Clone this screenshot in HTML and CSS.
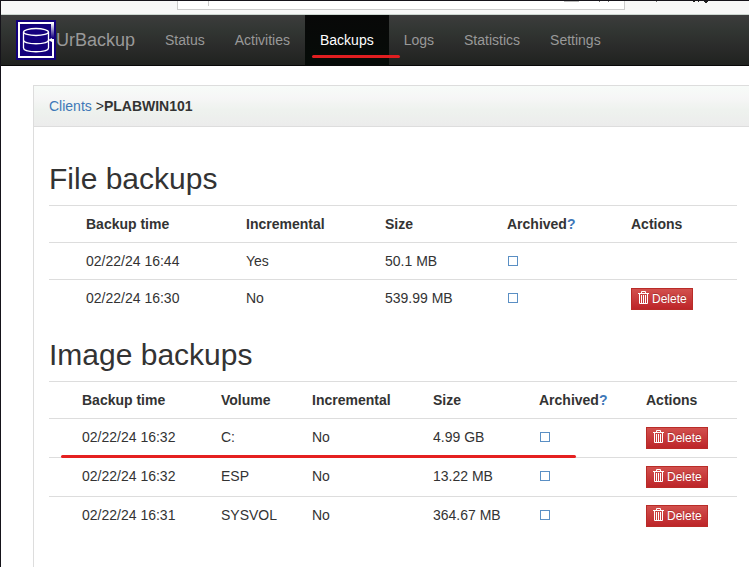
FILE: index.html
```html
<!DOCTYPE html>
<html lang="en">
<head>
<meta charset="utf-8">
<title>UrBackup</title>
<link rel="stylesheet" href="styles.css">
</head>
<body>
<svg class="sprite" aria-hidden="true">
  <symbol id="trash" viewBox="0 0 11 13">
    <path fill="none" stroke="#fff" d="M3.5 2V.5h4V2M0 2.5h11M1.5 3v9.5h8V3M3.5 4v8M5.5 4v8M7.5 4v8"/>
  </symbol>
</svg>
<div class="toolbar" aria-hidden="true"><div class="address"></div><svg class="bits" width="160" height="2" viewBox="0 0 160 2"><path fill="#bbb" d="M9 0h15v1H9z"/><path fill="#777" d="M44 0h1v1h-1zM53 0h1v1h-1zM101 0h1v1h-1z"/><path fill="#222" d="M138 0h2v1h-2zM143 0h1v1h-1zM149 0h4v1h-4zM150 1h2v1h-2z"/></svg></div>
<nav class="navbar">
  <a class="brand" href="#">
    <svg width="40" height="40" viewBox="0 0 40 40" aria-hidden="true">
      <defs>
        <linearGradient id="fade" x1="0" y1="0" x2="0" y2="1">
          <stop offset="0" stop-color="#fff"/>
          <stop offset="1" stop-color="#13007c"/>
        </linearGradient>
      </defs>
      <path fill="#13007c" d="M0 0h40v40H0z"/>
      <path fill="none" stroke="#fff" stroke-width="2" d="M38 3H3v34h34V19"/>
      <path fill="url(#fade)" d="M35 3h3v15h-3z"/>
      <path fill="none" stroke="#fff" stroke-width="1.3" d="M7.500 12v16c0 5 25 5 25 0V12M7.500 20c0 5 25 5 25 0"/>
      <ellipse cx="20" cy="12" rx="12.500" ry="3.500" fill="none" stroke="#fff" stroke-width="1.300"/>
      <path fill="#fff" d="M32 20l4-2v1h2v2h-2v1z"/>
    </svg>UrBackup</a>
  <a class="item" href="#">Status</a>
  <a class="item" href="#">Activities</a>
  <a class="item active" href="#">Backups</a>
  <a class="item" href="#">Logs</a>
  <a class="item" href="#">Statistics</a>
  <a class="item" href="#">Settings</a>
</nav>
<main class="panel">
  <div class="heading"><a href="#">Clients</a> &gt;<strong>PLABWIN101</strong></div>
  <div class="content">
    <h2>File backups</h2>
    <table class="files">
      <thead><tr><th class="lead"></th><th class="time">Backup time</th><th class="incr">Incremental</th><th class="size">Size</th><th class="arch">Archived<a href="#">?</a></th><th>Actions</th></tr></thead>
      <tbody>
        <tr><td></td><td>02/22/24 16:44</td><td>Yes</td><td>50.1 MB</td><td><input type="checkbox" aria-label="Archived"></td><td></td></tr>
        <tr><td></td><td>02/22/24 16:30</td><td>No</td><td>539.99 MB</td><td><input type="checkbox" aria-label="Archived"></td><td><button type="button"><svg width="11" height="13" aria-hidden="true"><use href="#trash"/></svg>Delete</button></td></tr>
      </tbody>
    </table>
    <h2>Image backups</h2>
    <table class="images">
      <thead><tr><th class="lead"></th><th class="time">Backup time</th><th class="volume">Volume</th><th class="incr">Incremental</th><th class="size">Size</th><th class="arch">Archived<a href="#">?</a></th><th>Actions</th></tr></thead>
      <tbody>
        <tr><td class="marked"></td><td>02/22/24 16:32</td><td>C:</td><td>No</td><td>4.99 GB</td><td><input type="checkbox" aria-label="Archived"></td><td><button type="button"><svg width="11" height="13" aria-hidden="true"><use href="#trash"/></svg>Delete</button></td></tr>
        <tr><td></td><td>02/22/24 16:32</td><td>ESP</td><td>No</td><td>13.22 MB</td><td><input type="checkbox" aria-label="Archived"></td><td><button type="button"><svg width="11" height="13" aria-hidden="true"><use href="#trash"/></svg>Delete</button></td></tr>
        <tr><td></td><td>02/22/24 16:31</td><td>SYSVOL</td><td>No</td><td>364.67 MB</td><td><input type="checkbox" aria-label="Archived"></td><td><button type="button"><svg width="11" height="13" aria-hidden="true"><use href="#trash"/></svg>Delete</button></td></tr>
      </tbody>
    </table>
  </div>
</main>
</body>
</html>
```
FILE: styles.css
```css
* { box-sizing: border-box; }

body {
  margin: 0;
  min-height: 100vh;
  display: flex;
  flex-direction: column;
  border-left: 1px solid #15131a;
  background: #fff;
  color: #333;
  font: 14px/20px "Liberation Sans", Arial, sans-serif;
}

a { color: #3f78b8; text-decoration: none; }

.sprite { position: absolute; width: 0; height: 0; }

.toolbar {
  position: relative;
  height: 15px;
  padding: 0 124px 0 176px;
  border-top: 1px solid #15131a;
  border-bottom: 1px solid #ccd6d0;
  background: #f7f7f7;
}

.address {
  height: 9px;
  padding-left: 30px;
  border: 1px solid #ccc;
  border-top: 0;
  background: #fff;
}

.address::before {
  content: "";
  display: block;
  width: 1px;
  height: 5px;
  background: #ccc;
}

.bits { position: absolute; top: 0; right: 34px; }

.navbar {
  display: flex;
  height: 51px;
  padding-left: 15px;
  border-bottom: 1px solid #080808;
  background: linear-gradient(#3c3c3c, #323633 30%, #2a2b2a 65%, #20221f);
}

.brand {
  display: flex;
  align-items: center;
  padding-right: 15px;
  color: #999;
  font-size: 18px;
}

.item {
  position: relative;
  padding: 15px;
  color: #999;
}

.item.active {
  background: linear-gradient(#080808, #060c08);
  color: #fff;
}

.item.active::after {
  content: "";
  position: absolute;
  z-index: 1;
  left: 7px;
  right: -11px;
  bottom: 7px;
  height: 3px;
  border-radius: 2px;
  background: #e01e20;
}

.panel {
  flex: 1;
  margin: 19px 0 0 32px;
  border: 1px solid #ddd;
  border-width: 1px 0 0 1px;
}

.heading {
  padding: 10px 15px;
  border-bottom: 1px solid #ddd;
  background: linear-gradient(#f7fbf8, #f6f6f6 30%, #eef2ee 60%, #ececec);
}

.content { padding: 15px 12px 15px 15px; }

h2 {
  margin: 20px 0 10px;
  font-size: 30px;
  line-height: 33px;
  font-weight: 400;
}

table {
  width: 100%;
  table-layout: fixed;
  border-collapse: separate;
  border-spacing: 0;
}

th, td {
  padding: 8px;
  border-top: 1px solid #ddd;
  text-align: left;
  vertical-align: top;
}

.files .lead { width: 29px; }
.files .time { width: 160px; }
.files .incr { width: 139px; }
.files .size { width: 122px; }
.files .arch { width: 124px; }

.images .lead { width: 25px; }
.images .time { width: 139px; }
.images .volume { width: 91px; }
.images .incr { width: 121px; }
.images .size { width: 106px; }
.images .arch { width: 107px; }

input {
  appearance: none;
  display: block;
  width: 10px;
  height: 10px;
  margin: 5px 1px;
  border: 1px solid #5a8fc4;
  background: #fff;
}

button {
  display: flex;
  align-items: center;
  gap: 3px;
  height: 22px;
  padding: 0 5px 0 6px;
  border: 1px solid #b92c28;
  background: linear-gradient(#d2504d, #bd2529);
  color: #fff;
  font: 12px/18px "Liberation Sans", Arial, sans-serif;
  text-shadow: 0 -1px 0 rgba(0, 0, 0, 0.2);
}

button svg { margin-bottom: 3px; }

.marked { position: relative; }

.marked::after {
  content: "";
  position: absolute;
  z-index: 1;
  left: 12px;
  bottom: -1px;
  width: 515px;
  height: 3px;
  border-radius: 2px;
  background: #e52020;
}
```
